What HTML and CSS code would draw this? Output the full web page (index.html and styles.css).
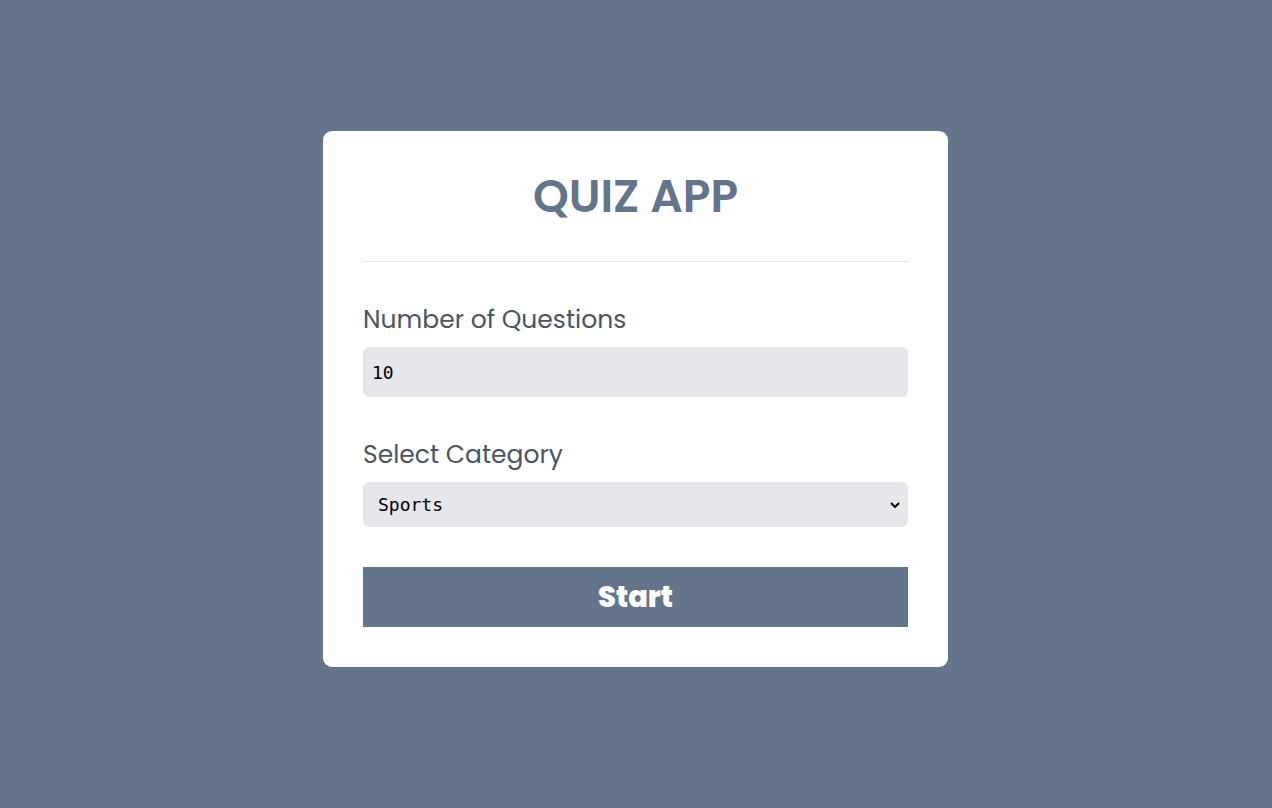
FILE: index.html
```html
<!DOCTYPE html>
<html lang="en">
<head>
<meta charset="utf-8">
<title>Quiz App</title>
<link rel="stylesheet" href="styles.css">
</head>
<body>
<main class="page">
  <div class="card">
    <h1 class="title">QUIZ APP</h1>
    <hr class="divider">
    <form class="form">
      <div class="field">
        <label class="label" for="num">Number of Questions</label>
        <input class="input" id="num" type="number" value="10">
      </div>
      <div class="field">
        <label class="label" for="cat">Select Category</label>
        <select class="select" id="cat">
          <option>Sports</option>
          <option>History</option>
          <option>Science</option>
        </select>
      </div>
      <button class="start" type="button">Start</button>
    </form>
  </div>
</main>
</body>
</html>
```

FILE: styles.css
```css
* { box-sizing: border-box; }
html, body { margin: 0; height: 100%; }
body {
  background: #64748b;
  font-family: "Poppins", "Inter", "Noto Sans", sans-serif;
}
.page {
  display: flex;
  justify-content: center;
  padding-top: 131px;
  padding-right: 1px;
}
.card {
  width: 625px;
  background: #fff;
  border-radius: 9px;
  padding: 40px;
}
.title {
  margin: 0;
  text-align: center;
  font-size: 45.5px;
  line-height: 50px;
  font-weight: 600;
  color: #64748b;
}
.divider {
  margin: 40px 0 0;
  border: 0;
  border-top: 1px solid #e5e7eb;
}
.form {
  display: flex;
  flex-direction: column;
  gap: 40px;
  padding-top: 40px;
}
.field {
  display: flex;
  flex-direction: column;
  gap: 9px;
}
.label {
  font-size: 25px;
  line-height: 36px;
  color: #4b5563;
  font-weight: 400;
}
.input, .select {
  border: 0;
  background-color: #e5e7eb;
  border-radius: 6px;
  font-family: "DejaVu Sans Mono", monospace;
  font-size: 18px;
  color: #000;
  outline: none;
}
.input {
  height: 50px;
  padding: 0 9px;
}
.select {
  height: 45px;
  padding: 0 15px;
  appearance: none;
  background-image: url("data:image/svg+xml;utf8,<svg xmlns='http://www.w3.org/2000/svg' width='10' height='6' viewBox='0 0 10 6'><path d='M1 1l4 4 4-4' fill='none' stroke='black' stroke-width='2'/></svg>");
  background-repeat: no-repeat;
  background-position: right 8px center;
}
.start {
  height: 60px;
  border: 0;
  background: #64748b;
  color: #fff;
  font-family: inherit;
  font-size: 29px;
  font-weight: 800;
  cursor: pointer;
}
```
